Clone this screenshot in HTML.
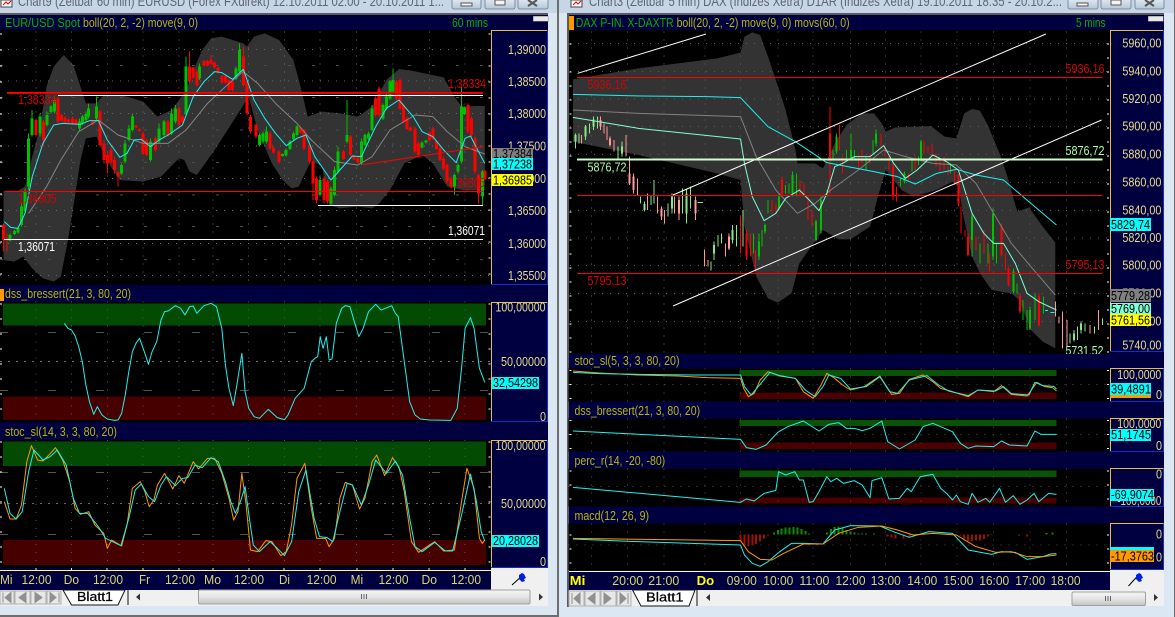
<!DOCTYPE html>
<html><head><meta charset="utf-8"><style>
html,body{margin:0;padding:0;background:#dbe7f3;width:1175px;height:617px;overflow:hidden}
svg{display:block}
text{font-family:"Liberation Sans",sans-serif;font-size:13px}
.n *{vector-effect:non-scaling-stroke}
rect,.c{shape-rendering:crispEdges}
polyline{stroke-linejoin:round}
.y{fill:#e8dc8c}.o{fill:#b8b800}.g{fill:#00b000}.k{fill:#000}.t{fill:#d8d870}.r{fill:#d80000}.w{fill:#fff}.p{fill:#aaffaa}
.lin{fill:none}
</style></head><body>
<svg xmlns="http://www.w3.org/2000/svg" width="1175" height="617" viewBox="0 0 1175 617">
<defs>
<linearGradient id="tb" x1="0" y1="0" x2="0" y2="1"><stop offset="0" stop-color="#f6f6f6"/><stop offset=".5" stop-color="#e4e4e4"/><stop offset="1" stop-color="#c4c4c4"/></linearGradient>
<linearGradient id="bt" x1="0" y1="0" x2="0" y2="1"><stop offset="0" stop-color="#eef3f8"/><stop offset="1" stop-color="#b4c6d8"/></linearGradient>
</defs>
<rect width="1175" height="617" fill="#dbe7f3"/>
<rect width="1175" height="13" fill="#c6d6e6"/>
<!-- frames -->
<rect x="557" y="0" width="2" height="617" fill="#6e6e6e"/>
<rect x="1174" y="0" width="1" height="617" fill="#6e6e6e"/>
<rect x="0" y="615" width="559" height="2" fill="#6e6e6e"/>
<rect x="0" y="13" width="548" height="2" fill="#5a5a5a"/>
<rect x="567" y="13" width="597" height="2" fill="#5a5a5a"/>
<rect x="567" y="13" width="2" height="594" fill="#5a5a5a"/>
<!-- title bars -->
<rect x="1" y="0" width="11" height="7" fill="#fff" stroke="#444" stroke-width=".6"/><path d="M3 5l3-3 2 2 3-3" stroke="#d00" fill="none"/>
<text x="18" y="6" fill="#5d6670" textLength="426" lengthAdjust="spacingAndGlyphs" style="font-size:14px">Chart9 (Zeitbar 60 min)  EURUSD (Forex FXdirekt) 12.10.2011 02:00 - 20.10.2011 1...</text>
<rect x="571" y="0" width="11" height="7" fill="#fff" stroke="#444" stroke-width=".6"/><path d="M573 5l3-3 2 2 3-3" stroke="#d00" fill="none"/>
<text x="589" y="6" fill="#5d6670" textLength="473" lengthAdjust="spacingAndGlyphs" style="font-size:14px">Chart3 (Zeitbar 5 min)  DAX (Indizes Xetra) D1AR (Indizes Xetra) 19.10.2011 18:35 - 20.10.2...</text>
<g fill="url(#bt)" stroke="#6a7a8a" stroke-width=".8">
<rect x="452" y="-4" width="29" height="13" rx="2" style="shape-rendering:auto"/><rect x="485" y="-4" width="30" height="13" rx="2" style="shape-rendering:auto"/><rect x="518" y="-4" width="30" height="13" rx="2" style="shape-rendering:auto"/>
<rect x="1068" y="-4" width="30" height="13" rx="2" style="shape-rendering:auto"/><rect x="1101" y="-4" width="30" height="13" rx="2" style="shape-rendering:auto"/><rect x="1135" y="-4" width="29" height="13" rx="2" style="shape-rendering:auto"/>
</g>
<g fill="#f4f4f4" stroke="#555" stroke-width="1">
<rect x="461" y="3" width="11" height="3"/><rect x="495" y="0" width="10" height="5"/><rect x="1077" y="3" width="11" height="3"/><rect x="1111" y="0" width="10" height="5"/>
</g>
<path d="M528 0l9 6m0-6l-9 6M1145 0l9 6m0-6l-9 6" stroke="#555" stroke-width="2" fill="none"/>

<!-- LEFT WINDOW -->
<rect x="0" y="15" width="548" height="15" fill="#000040"/>
<rect x="0" y="30" width="491" height="255" fill="#000"/>
<rect x="491" y="30" width="57" height="255" fill="#000040"/>
<rect x="533" y="16" width="15" height="5" fill="#e8e8e8" stroke="#888" stroke-width=".5"/>
<g class="n" transform="scale(.35778,.33333)">
<polygon fill="#333" points="10,572 50,572 70,560 90,470 110,390 130,260 150,200 178,165 205,195 225,260 240,310 270,310 290,285 340,285 400,305 440,350 480,330 520,270 545,200 565,150 590,115 620,110 680,130 690,140 710,110 740,100 780,120 820,180 840,260 860,350 900,335 950,340 1000,350 1040,320 1080,240 1115,207 1150,212 1240,232 1270,290 1290,320 1330,318 1355,318 1355,570 1300,572 1250,560 1210,490 1180,465 1130,490 1090,570 1060,610 1040,625 1000,620 950,625 920,615 900,500 870,480 835,560 815,565 790,540 760,490 720,390 695,290 660,350 600,450 550,525 530,515 515,480 500,475 450,530 400,545 335,540 310,500 285,450 270,410 240,415 225,480 205,620 190,720 170,830 150,845 120,835 90,805 65,770 40,785 10,780"/>
<path class="c" stroke="#6a6a6a" stroke-dasharray="1 7" fill="none" d="M0 148H1372M0 243H1372M0 340H1372M0 438H1372M0 535H1372M0 632H1372M0 730H1372M0 826H1372M100 95V855M200 95V855M300 95V855M400 95V855M500 95V855M595 95V855M695 95V855M795 95V855M895 95V855M997 95V855M1098 95V855M1200 95V855M1300 95V855"/>
<path class="c" stroke="#4c4c4c" stroke-dasharray="3 21" fill="none" d="M0 196H1372M0 293H1372M0 390H1372M0 487H1372M0 585H1372M0 680H1372M0 778H1372"/>
<path class="c" stroke="#fff" stroke-width="2" stroke-dasharray="1 15" fill="none" d="M3 100V855M1368 100V855"/>
<!-- wicks -->
<path class="c" stroke="#00c000" stroke-width="1" fill="none" d="M28 700V725M40 690V705M50 680V700M60 610V680M70 565V640M80 400V570M90 330V410M112 340V410M132 335V380M142 315V340M152 285V340M222 355V395M230 345V375M240 335V365M248 310V355M270 290V360M340 490V525M350 420V490M360 375V425M370 340V395M420 415V485M445 370V430M458 360V410M480 325V405M490 315V370M520 170V345M558 190V240M660 200V240M670 130V220M725 400V440M735 395V430M745 380V430M790 460V470M800 445V470M810 420V450M820 395V420M830 375V410M895 530V590M925 560V615M935 500V590M945 440V520M970 300V430M1010 415V495M1020 400V440M1030 395V420M1040 315V395M1070 310V360M1080 280V330M1090 240V300M1098 205V280M1180 425V445M1190 420V430M1270 520V585M1280 490V520M1290 260V490M1298 320V345M1348 510V615"/>
<path class="c" stroke="#ff0000" stroke-width="1" fill="none" d="M10 670V755M20 700V755M100 355V410M122 360V440M162 290V370M172 340V365M182 350V370M192 355V370M202 350V375M212 355V375M258 360V375M280 330V440M290 420V490M300 460V520M310 440V490M320 470V520M330 515V560M380 375V385M390 385V395M400 395V465M410 415V470M435 410V455M470 360V410M500 320V380M510 345V370M530 155V250M540 200V235M550 210V260M570 180V200M580 180V200M590 165V195M600 185V205M610 200V220M620 225V250M630 225V250M640 235V275M650 240V275M680 140V260M690 240V345M700 345V400M715 370V415M755 395V450M765 440V460M780 450V490M840 380V400M850 385V450M865 430V490M875 480V600M885 530V610M905 530V610M915 540V610M960 450V480M980 405V470M990 465V480M1000 470V490M1050 290V350M1060 260V350M1108 240V300M1118 235V330M1128 310V370M1138 350V390M1148 380V395M1160 380V460M1170 425V470M1200 395V425M1210 380V420M1220 420V450M1230 440V485M1240 470V510M1250 490V550M1260 530V565M1308 310V400M1318 350V410M1328 410V520M1338 520V610M1356 510V540"/>
<!-- bodies -->
<path class="c" stroke="#00c000" stroke-width="3" fill="none" d="M28 705V722M40 693V702M50 684V697M60 620V675M70 575V632M80 415V560M90 355V405M112 350V400M132 345V375M142 320V336M152 300V335M222 365V385M230 350V370M240 342V360M248 325V350M270 320V355M340 495V520M350 430V485M360 385V420M370 350V390M420 425V480M445 385V425M458 365V405M480 340V400M490 325V365M520 200V340M558 200V235M660 205V235M670 150V215M725 405V435M735 400V425M745 395V425M790 462V468M800 450V467M810 425V447M820 400V417M830 380V405M895 540V585M925 565V610M935 510V585M945 455V515M970 405V425M1010 425V490M1020 405V435M1030 400V415M1040 325V390M1070 315V355M1080 290V325M1090 245V295M1098 240V275M1180 427V442M1190 422V428M1270 525V560M1280 495V515M1290 320V485M1298 322V342M1348 515V590"/>
<path class="c" stroke="#ff0000" stroke-width="3" fill="none" d="M10 675V720M100 360V405M122 365V420M162 295V365M172 345V362M182 353V367M192 358V367M202 355V372M212 358V372M258 362V373M280 335V435M290 430V480M300 465V490M310 450V485M320 480V510M330 518V530M380 377V383M390 387V393M400 400V462M410 420V465M435 415V450M470 365V405M500 325V375M510 350V367M530 200V245M540 203V232M550 215V255M570 183V197M580 183V197M590 180V192M600 188V202M610 203V217M620 228V247M630 228V247M640 240V270M650 245V270M680 170V255M690 245V340M700 350V395M715 375V410M755 400V445M765 442V458M780 455V485M840 383V397M850 390V445M865 435V485M875 485V550M885 535V600M905 535V600M915 545V605M960 455V477M980 410V465M990 467V478M1000 472V487M1050 295V345M1060 265V345M1108 245V295M1118 240V325M1128 315V365M1138 355V387M1148 382V392M1160 385V455M1170 430V465M1200 398V422M1210 385V417M1220 423V447M1230 445V480M1240 475V505M1250 495V545M1260 535V560M1308 315V395M1318 355V405M1328 415V515M1338 525V580M1356 513V537"/>
<!-- averages -->
<polyline class="lin" stroke="#858585" points="80,640 130,560 170,480 220,395 275,360 330,405 400,430 470,430 520,390 580,310 640,250 680,215 720,250 770,310 830,370 870,420 935,485 1000,495 1040,470 1090,390 1160,345 1210,350 1250,395 1300,440 1355,462"/>
<polyline class="lin" stroke="#20f0f0" points="12,665 30,682 50,685 70,640 90,530 120,430 150,375 175,370 225,373 250,362 275,362 300,420 335,472 355,460 375,420 395,418 420,440 445,420 470,405 510,375 540,290 570,245 600,215 620,218 650,238 680,208 710,300 740,355 770,400 800,437 830,415 855,405 880,470 925,540 950,510 985,468 1010,470 1050,380 1080,325 1115,300 1155,350 1180,395 1210,410 1240,450 1275,488 1300,415 1315,408 1340,460 1355,490"/>
<!-- levels -->
<path class="c" fill="none" stroke="#ff0000" d="M15 575H1352"/>
<path fill="none" stroke="#ff0000" d="M1015 494L1352 440"/>
</g>
<rect x="7" y="92" width="476" height="1" fill="#ff0000"/>
<rect x="7" y="93" width="476" height="1" fill="#e00000"/>
<rect x="58" y="95" width="425" height="1" fill="#ffffff"/>
<rect x="4" y="239" width="479" height="1" fill="#ffffff"/>
<rect x="318" y="205" width="165" height="1" fill="#ffffff"/>
<text class="r" x="18" y="104" textLength="38.500" lengthAdjust="spacingAndGlyphs">1,38334</text>
<text class="r" x="448" y="88" textLength="38" lengthAdjust="spacingAndGlyphs">1,38334</text>
<text class="r" x="18" y="203" textLength="38.500" lengthAdjust="spacingAndGlyphs">1,36805</text>
<text class="r" x="457" y="187" textLength="28" lengthAdjust="spacingAndGlyphs">36805</text>
<text class="w" x="18" y="251" textLength="37" lengthAdjust="spacingAndGlyphs">1,36071</text>
<text class="w" x="448" y="235" textLength="37" lengthAdjust="spacingAndGlyphs">1,36071</text>
<text class="g" x="5" y="27" textLength="75" lengthAdjust="spacingAndGlyphs">EUR/USD Spot</text>
<text class="o" x="83" y="27" textLength="115" lengthAdjust="spacingAndGlyphs">boll(20, 2, -2) move(9, 0)</text>
<text class="g" x="452" y="27" textLength="36" lengthAdjust="spacingAndGlyphs">60 mins</text>
<!-- axis L1 -->
<path d="M548 30.500H491.500V284" fill="none" stroke="#e8c040"/><path d="M491 284.500H547.500V30" fill="none" stroke="#1030c0"/>
<g class="y">
<text x="508" y="54" textLength="38" lengthAdjust="spacingAndGlyphs">1,39000</text>
<text x="508" y="86" textLength="38" lengthAdjust="spacingAndGlyphs">1,38500</text>
<text x="508" y="118" textLength="38" lengthAdjust="spacingAndGlyphs">1,38000</text>
<text x="508" y="150.500" textLength="38" lengthAdjust="spacingAndGlyphs">1,37500</text>
<text x="508" y="183" textLength="38" lengthAdjust="spacingAndGlyphs">1,37000</text>
<text x="508" y="215" textLength="38" lengthAdjust="spacingAndGlyphs">1,36500</text>
<text x="508" y="248" textLength="38" lengthAdjust="spacingAndGlyphs">1,36000</text>
<text x="508" y="280" textLength="38" lengthAdjust="spacingAndGlyphs">1,35500</text>
</g>
<rect x="492" y="148" width="41" height="10" fill="#808080"/><text class="k" x="493" y="158" textLength="39" lengthAdjust="spacingAndGlyphs">1,37384</text>
<rect x="492" y="158" width="41" height="12" fill="#00ffff"/><text class="k" x="493" y="168.500" textLength="39" lengthAdjust="spacingAndGlyphs">1,37238</text>
<rect x="492" y="174" width="41" height="12" fill="#ffff00"/><text class="k" x="493" y="184.500" textLength="39" lengthAdjust="spacingAndGlyphs">1,36985</text>

<!-- lower left -->
<rect x="0" y="285" width="548" height="17" fill="#000040"/>
<rect x="0" y="289" width="4" height="12" fill="#ff9900"/>
<rect x="0" y="422" width="548" height="18" fill="#000040"/>
<rect x="0" y="302" width="491" height="120" fill="#000"/>
<rect x="0" y="440" width="491" height="128" fill="#000"/>
<rect x="491" y="302" width="57" height="120" fill="#000040"/>
<rect x="491" y="440" width="57" height="128" fill="#000040"/>
<rect x="0" y="568" width="491" height="22" fill="#000040"/>
<rect x="491" y="568" width="57" height="22" fill="#f0f0f0"/>
<rect x="0" y="590" width="548" height="16" fill="#f0f0f0"/>
<g class="n" transform="translate(0,285) scale(.35778,.33333)">
<rect x="8" y="55" width="1350" height="67" fill="#034a03"/>
<rect x="8" y="335" width="1350" height="70" fill="#470000"/>
<rect x="8" y="470" width="1350" height="73" fill="#034a03"/>
<rect x="8" y="765" width="1350" height="75" fill="#470000"/>
<path class="c" stroke="#6a6a6a" stroke-dasharray="2 6" fill="none" d="M0 230H1372M0 656H1372"/>
<path class="c" stroke="#555" stroke-dasharray="8 40" fill="none" d="M0 143H1372M0 317H1372M0 562H1372M0 748H1372"/>
<path class="c" stroke="#555" stroke-dasharray="1 7" fill="none" d="M100 50V410M200 50V410M300 50V410M400 50V410M500 50V410M595 50V410M695 50V410M795 50V410M895 50V410M997 50V410M1098 50V410M1200 50V410M1300 50V410M100 465V848M200 465V848M300 465V848M400 465V848M500 465V848M595 465V848M695 465V848M795 465V848M895 465V848M997 465V848M1098 465V848M1200 465V848M1300 465V848"/>
<path class="c" stroke="#fff" stroke-width="2" stroke-dasharray="1 14" fill="none" d="M3 55V410M1368 55V410M3 470V848M1368 470V848"/>
<polyline class="lin" stroke="#20f0f0" points="180,115 190,130 200,135 210,153 220,185 230,230 240,300 250,350 262,388 272,365 285,390 300,402 320,406 330,405 340,385 350,330 360,260 370,200 380,175 390,160 405,205 415,238 425,200 438,170 450,105 460,80 470,78 490,62 505,70 517,90 530,65 540,63 550,85 570,62 590,55 605,65 620,130 630,240 640,310 652,362 662,300 676,205 685,320 695,370 710,395 725,400 750,373 775,398 795,404 805,390 825,340 850,310 870,230 880,220 888,215 895,155 903,190 912,155 920,225 928,222 940,115 955,70 965,62 978,65 1003,155 1015,130 1030,80 1050,58 1065,75 1095,62 1105,85 1113,95 1130,230 1145,350 1160,390 1175,402 1200,405 1260,406 1278,370 1290,250 1300,130 1315,98 1325,130 1340,250 1355,292"/>
<polyline class="lin" stroke="#ff9900" points="12,650 28,702 45,702 60,660 75,530 88,482 105,525 120,528 135,512 155,488 175,525 195,590 210,670 225,688 248,680 265,720 290,745 300,790 312,765 340,783 355,720 370,610 392,590 405,620 417,665 430,645 440,600 460,565 483,612 500,572 515,595 540,530 555,552 580,520 600,520 620,565 640,640 653,705 665,680 676,565 688,660 700,795 720,800 743,767 760,770 785,812 800,800 815,720 830,580 852,535 870,670 885,760 910,760 920,785 935,760 950,640 965,592 985,600 1005,672 1020,640 1040,530 1053,510 1075,572 1097,518 1115,545 1130,620 1150,770 1170,802 1215,770 1240,798 1270,795 1290,650 1305,550 1325,610 1340,760 1348,775 1355,765"/>
<polyline class="lin" stroke="#20f0f0" points="12,610 28,685 45,702 62,680 80,560 95,495 120,525 140,515 160,495 185,540 205,640 222,685 245,685 275,725 295,760 315,770 338,782 360,700 378,615 395,597 415,635 432,650 450,600 465,575 490,602 510,580 525,578 545,540 565,548 590,518 610,530 630,590 645,650 658,685 672,650 685,605 697,700 708,780 725,800 755,770 775,790 795,812 815,770 835,620 855,555 878,700 893,755 915,758 930,770 950,680 970,595 985,600 1010,660 1030,600 1050,525 1080,565 1105,528 1125,570 1145,700 1160,785 1180,800 1215,772 1245,798 1265,798 1290,690 1315,567 1330,640 1345,740 1355,768"/>
</g>
<text class="o" x="5" y="298" textLength="126" lengthAdjust="spacingAndGlyphs">dss_bressert(21, 3, 80, 20)</text>
<text class="o" x="5" y="436" textLength="112" lengthAdjust="spacingAndGlyphs">stoc_sl(14, 3, 3, 80, 20)</text>
<path d="M548 302.500H491.500V421.500" fill="none" stroke="#e8c040"/><path d="M491 421.500H547.500V302" fill="none" stroke="#1030c0"/>
<path d="M548 440.500H491.500V567.500" fill="none" stroke="#e8c040"/><path d="M491 567.500H547.500V440" fill="none" stroke="#1030c0"/>
<g class="y">
<text x="495.500" y="311.500" textLength="50" lengthAdjust="spacingAndGlyphs">100,00000</text>
<text x="501" y="366" textLength="45" lengthAdjust="spacingAndGlyphs">50,00000</text>
<text x="540" y="421" textLength="6" lengthAdjust="spacingAndGlyphs">0</text>
<text x="495.500" y="450" textLength="50" lengthAdjust="spacingAndGlyphs">100,00000</text>
<text x="501" y="508" textLength="45" lengthAdjust="spacingAndGlyphs">50,00000</text>
<text x="540" y="566" textLength="6" lengthAdjust="spacingAndGlyphs">0</text>
</g>
<rect x="492" y="377" width="47" height="12" fill="#00ffff"/><text class="k" x="493" y="387" textLength="45" lengthAdjust="spacingAndGlyphs">32,54298</text>
<rect x="492" y="535" width="47" height="12" fill="#00ffff"/><text class="k" x="493" y="545" textLength="45" lengthAdjust="spacingAndGlyphs">20,28028</text>
<!-- time axis left -->
<rect x="0" y="570" width="491" height="1" fill="#ffff60"/>
<path class="c" d="M36 568v2M71.500 568v2M107 568v2M143 568v2M179 568v2M213 568v2M249 568v2M284 568v2M320 568v2M357 568v2M393 568v2M429 568v2M465 568v2" stroke="#ffff60"/>
<g class="t">
<text x="0" y="584" textLength="12.500" lengthAdjust="spacingAndGlyphs">Mi</text>
<text x="21.500" y="584" textLength="30" lengthAdjust="spacingAndGlyphs">12:00</text>
<text x="63.700" y="584" textLength="15.300" lengthAdjust="spacingAndGlyphs">Do</text>
<text x="93" y="584" textLength="30" lengthAdjust="spacingAndGlyphs">12:00</text>
<text x="139" y="584" textLength="11" lengthAdjust="spacingAndGlyphs">Fr</text>
<text x="165" y="584" textLength="30" lengthAdjust="spacingAndGlyphs">12:00</text>
<text x="204" y="584" textLength="17" lengthAdjust="spacingAndGlyphs">Mo</text>
<text x="234" y="584" textLength="30" lengthAdjust="spacingAndGlyphs">12:00</text>
<text x="279" y="584" textLength="11" lengthAdjust="spacingAndGlyphs">Di</text>
<text x="306.600" y="584" textLength="30" lengthAdjust="spacingAndGlyphs">12:00</text>
<text x="350.600" y="584" textLength="12.500" lengthAdjust="spacingAndGlyphs">Mi</text>
<text x="378.500" y="584" textLength="30" lengthAdjust="spacingAndGlyphs">12:00</text>
<text x="421.500" y="584" textLength="15.500" lengthAdjust="spacingAndGlyphs">Do</text>
<text x="451" y="584" textLength="30" lengthAdjust="spacingAndGlyphs">12:00</text>
</g>
<path d="M512 585L523 575" stroke="#000" stroke-width="1" fill="none"/>
<path d="M519 575l3-2 2 1 2 4-2 1 1 2-3 1-3-3z" fill="#0020e0"/>
<!-- tab row left -->
<g fill="#e8e8e8" stroke="#b0b0b0">
<rect x="0" y="591" width="14" height="13"/><rect x="15" y="591" width="15" height="13"/><rect x="31" y="591" width="15" height="13"/><rect x="47" y="591" width="14" height="13"/>
</g>
<path d="M3 592.500v10M11 592.500v10L5 597.500zM26 592.500v10l-7-5zM35 592.500v10l7-5zM50 592.500v10l6-5zM59 592.500v10" fill="#909090" stroke="#909090"/>
<polygon points="63,590 71.500,605 118,605 125,590" fill="#fff" stroke="#111"/>
<text x="77" y="601" fill="#000" stroke="#000" stroke-width=".25" textLength="36" lengthAdjust="spacingAndGlyphs">Blatt1</text>
<rect x="127" y="590" width="2" height="15" fill="#808080"/>
<rect x="198.500" y="590" width="331.500" height="14" rx="1.500" fill="url(#tb)" stroke="#a0a0a0" style="shape-rendering:auto"/>
<path d="M361.500 594v5M364 594v5M366.500 594v5" stroke="#666" fill="none"/>
<path d="M140 593.500v7l-4-3.500zM539 593.500v7l4-3.500z" fill="#333"/>

<!-- RIGHT WINDOW -->
<rect x="569" y="15" width="595" height="15" fill="#000040"/>
<rect x="569" y="30" width="541" height="324" fill="#000"/>
<rect x="1110" y="30" width="54" height="324" fill="#000040"/>
<rect x="569" y="16" width="5" height="14" fill="#ff9900"/>
<rect x="1148" y="16" width="15" height="5" fill="#e8e8e8" stroke="#888" stroke-width=".5"/>
<g class="n" transform="translate(560,0) scale(.39246,.33333)">
<polygon fill="#333" points="33,238 200,205 400,175 460,158 470,110 490,97 510,105 530,170 550,240 575,330 600,450 605,490 650,490 670,505 680,480 700,430 730,375 770,340 800,340 820,370 830,395 855,382 945,378 980,410 1010,415 1030,340 1050,327 1070,332 1090,375 1120,460 1140,530 1165,635 1195,622 1230,680 1262,728 1262,1045 1230,1025 1200,990 1170,900 1150,880 1100,870 1070,820 1050,770 1030,660 1015,560 1000,545 960,570 900,590 870,570 830,510 810,590 790,680 740,718 710,718 670,690 640,740 610,790 590,880 555,908 530,895 500,830 470,680 460,540 400,520 200,465 33,425"/>
<path class="c" stroke="#5c5c5c" stroke-dasharray="1 7" fill="none" d="M25 130H1400M25 214H1400M25 297H1400M25 380H1400M25 463H1400M25 547H1400M25 631H1400M25 714H1400M25 796H1400M25 880H1400M25 964H1400M80 95V1058M172 95V1058M265 95V1058M370 95V1058M460 95V1058M555 95V1058M645 95V1058M740 95V1058M830 95V1058M920 95V1058M1012 95V1058M1105 95V1058M1197 95V1058M1290 95V1058"/>
<path class="c" stroke="#fff" stroke-width="2" stroke-dasharray="1 13" fill="none" d="M27 130V1058M1396 130V1058"/>
<!-- pale bars -->
<path class="c" stroke="#88e888" stroke-width="1" fill="none" d="M40 400V445M48 400V430M65 375V420M75 370V400M85 350V390M95 350V385M148 440V475M158 425V470M205 590V610M215 605V635M232 585V615M240 540V610M275 610V650M285 580V640M312 565V640M322 565V670M332 560V625M350 607H365M385 785V812M393 725V780M403 705V740M412 700V730M440 675V730M450 675V740M466 630V740M1300 1000V1030M1310 990V1025M1318 980V1020M1328 965V1000M1338 970V995M1362 980V1000M1382 955V975"/>
<path class="c" stroke="#ff9a9a" stroke-width="1" fill="none" d="M55 405V430M103 350V390M112 370V400M120 380V420M128 410V440M138 420V455M168 405V470M177 470V555M187 520V580M197 535V585M223 580V630M248 590V640M258 620V660M266 630V670M292 590V640M303 590V660M345 590V660M368 748V800M377 780V800M422 730V770M430 700V750M1262 905V950M1272 950V970M1280 935V1045M1292 960V1040M1350 975V1000M1372 930V990"/>
<path class="c" stroke="#88e888" stroke-width="2" fill="none" d="M40 405V425M65 380V410M85 358V380M158 440V460M215 612V630M285 590V625M322 580V640M393 735V760M440 690V720M1310 1000V1020M1328 970V990"/>
<path class="c" stroke="#ff9a9a" stroke-width="2" fill="none" d="M103 360V380M128 415V435M177 520V550M187 530V570M258 625V650M303 600V640M345 600V640M430 710V745"/>
<!-- strong bars -->
<path class="c" stroke="#00c000" stroke-width="1" fill="none" d="M493 700V760M507 700V780M515 690V740M522 670V700M530 600V640M558 580V630M575 555V580M583 550V580M592 515V590M603 520V590M652 660V725M665 590V700M680 570V590M696 450V480M705 400V460M730 450V480M742 400V480M750 450V480M780 470V510M797 420V460M805 388V440M868 535V560M878 515V550M897 480V515M913 470V495M920 420V480M995 490V520M1050 640V770M1070 730V790M1090 730V790M1103 625V780M1112 730V790M1155 805V880M1165 850V880M1180 900V960M1190 930V990M1197 920V990M1210 880V960M1232 890V940"/>
<path class="c" stroke="#ff0000" stroke-width="1" fill="none" d="M460 650V760M475 690V780M485 700V770M498 750V810M540 600V640M550 610V640M566 530V590M612 540V590M622 550V590M632 590V660M642 630V680M688 320V580M712 375V450M720 470V520M760 470V510M770 450V490M790 460V490M818 400V440M828 440V470M838 470V510M848 490V600M858 560V605M888 520V540M905 470V510M928 425V460M938 440V460M948 430V470M958 460V500M968 480V515M978 470V510M988 500V525M1005 510V555M1015 520V620M1022 620V700M1032 690V710M1040 700V770M1060 710V750M1080 690V760M1095 760V815M1125 670V770M1135 760V810M1143 800V860M1172 880V940M1220 880V980"/>
<path class="c" stroke="#00c000" stroke-width="2" fill="none" d="M507 725V770M522 675V695M558 590V625M592 525V580M652 665V720M665 600V690M705 410V455M742 450V475M805 400V430M878 520V545M920 425V475M1050 650V720M1103 640V770M1155 815V875M1197 930V985"/>
<path class="c" stroke="#ff0000" stroke-width="2" fill="none" d="M475 700V770M566 540V580M688 400V480M848 500V590M1015 530V610M1040 710V765M1125 680V765M1143 805V855M1220 890V975M1172 890V935"/>
<!-- MAs -->
<polyline class="lin" stroke="#808080" points="33,330 200,340 460,350 500,470 550,570 605,640 650,610 690,570 760,510 825,450 880,470 950,490 1010,495 1060,550 1100,630 1150,730 1200,800 1262,885"/>
<polyline class="lin" stroke="#20f0f0" points="33,283 210,288 375,290 460,293 530,380 600,425 680,488 800,515 860,530 905,552 960,520 1010,508 1060,525 1130,540 1170,580 1230,640 1265,675"/>
<polyline class="lin" stroke="#7fffd4" points="33,352 200,385 460,417 470,490 490,590 520,662 550,640 575,595 610,570 635,600 660,632 680,580 700,500 720,490 750,470 790,470 825,437 850,490 880,535 910,510 950,465 985,485 1015,510 1050,640 1080,700 1105,730 1130,730 1160,790 1190,880 1220,905 1265,930"/>
<path class="c" stroke="#00ffff" fill="none" d="M1236 932H1244M1250 938H1260"/>
<!-- levels -->
<path class="c" stroke="#ff0000" fill="none" d="M43 232H1382M43 587H1382M43 820H1382"/>
<path stroke="#ffffff" fill="none" d="M45 220L372 102M288 585L1238 102M288 918L1380 360"/>
<path class="c" stroke="#ccffcc" stroke-width="2" fill="none" d="M43 478H1382"/>
</g>
<text class="r" x="587.500" y="89" textLength="39" lengthAdjust="spacingAndGlyphs">5936,16</text>
<text class="r" x="1065.500" y="73" textLength="39" lengthAdjust="spacingAndGlyphs">5936,16</text>
<text class="p" x="587.500" y="171.500" textLength="39" lengthAdjust="spacingAndGlyphs">5876,72</text>
<text class="p" x="1065.500" y="155" textLength="39" lengthAdjust="spacingAndGlyphs">5876,72</text>
<text class="r" x="587.500" y="285" textLength="39" lengthAdjust="spacingAndGlyphs">5795,13</text>
<text class="r" x="1065.500" y="269" textLength="39" lengthAdjust="spacingAndGlyphs">5795,13</text>
<text class="p" x="1065.500" y="355" textLength="38" lengthAdjust="spacingAndGlyphs">5731,52</text>
<text class="g" x="575.700" y="27" textLength="98" lengthAdjust="spacingAndGlyphs">DAX P-IN. X-DAXTR</text>
<text class="o" x="676.600" y="27" textLength="173" lengthAdjust="spacingAndGlyphs">boll(20, 2, -2) move(9, 0) movs(60, 0)</text>
<text class="g" x="1076" y="27" textLength="29.500" lengthAdjust="spacingAndGlyphs">5 mins</text>
<path d="M1164 30.500H1110.500V351" fill="none" stroke="#e8c040"/><path d="M1110 351.500H1163.500V30" fill="none" stroke="#1030c0"/>
<g class="y">
<text x="1122.400" y="47.300" textLength="39" lengthAdjust="spacingAndGlyphs">5960,00</text>
<text x="1122.400" y="75.300" textLength="39" lengthAdjust="spacingAndGlyphs">5940,00</text>
<text x="1122.400" y="103" textLength="39" lengthAdjust="spacingAndGlyphs">5920,00</text>
<text x="1122.400" y="130.700" textLength="39" lengthAdjust="spacingAndGlyphs">5900,00</text>
<text x="1122.400" y="158.300" textLength="39" lengthAdjust="spacingAndGlyphs">5880,00</text>
<text x="1122.400" y="186.300" textLength="39" lengthAdjust="spacingAndGlyphs">5860,00</text>
<text x="1122.400" y="214.300" textLength="39" lengthAdjust="spacingAndGlyphs">5840,00</text>
<text x="1122.400" y="242" textLength="39" lengthAdjust="spacingAndGlyphs">5820,00</text>
<text x="1122.400" y="269.300" textLength="39" lengthAdjust="spacingAndGlyphs">5800,00</text>
<text x="1122.400" y="297.300" textLength="39" lengthAdjust="spacingAndGlyphs">5780,00</text>
<text x="1122.400" y="325.300" textLength="39" lengthAdjust="spacingAndGlyphs">5760,00</text>
<text x="1122.400" y="349.700" textLength="39" lengthAdjust="spacingAndGlyphs">5740,00</text>
</g>
<rect x="1110" y="218" width="41" height="13" fill="#00ffff"/><text class="k" x="1111" y="229" textLength="39" lengthAdjust="spacingAndGlyphs">5829,74</text>
<rect x="1110" y="289" width="41" height="13" fill="#808080"/><text class="k" x="1111" y="300" textLength="39" lengthAdjust="spacingAndGlyphs">5779,28</text>
<rect x="1110" y="303" width="41" height="11" fill="#7fffd4"/><text class="k" x="1111" y="313" textLength="39" lengthAdjust="spacingAndGlyphs">5769,00</text>
<rect x="1110" y="314" width="41" height="12" fill="#ffff00"/><text class="k" x="1111" y="324.500" textLength="39" lengthAdjust="spacingAndGlyphs">5761,56</text>
<!-- lower right -->
<rect x="569" y="354" width="595" height="216" fill="#000040"/>
<rect x="569" y="570" width="541" height="20" fill="#000040"/>
<rect x="1110" y="570" width="54" height="20" fill="#f0f0f0"/>
<rect x="569" y="590" width="595" height="16" fill="#f0f0f0"/>
<g class="n" transform="translate(560,345) scale(.39246,.33333)">
<rect x="22" y="70" width="1378" height="100" fill="#000"/>
<rect x="22" y="220" width="1378" height="100" fill="#000"/>
<rect x="22" y="370" width="1378" height="115" fill="#000"/>
<rect x="22" y="535" width="1378" height="140" fill="#000"/>
<path class="c" fill="#0a5206" d="M457 75H1265V93H457ZM457 225H1265V243H457ZM457 376H1265V396H457Z"/>
<path class="c" fill="#4a0000" d="M457 143H1265V162H457ZM457 293H1265V312H457ZM457 457H1265V476H457Z"/>
<path class="c" stroke="#505050" stroke-dasharray="1 7" fill="none" d="M22 118H1400M22 268H1400M22 425H1400M22 600H1400M80 70V170M172 70V170M265 70V170M370 70V170M460 70V170M555 70V170M645 70V170M740 70V170M830 70V170M920 70V170M1012 70V170M1105 70V170M1197 70V170M1290 70V170M80 220V320M172 220V320M265 220V320M370 220V320M460 220V320M555 220V320M645 220V320M740 220V320M830 220V320M920 220V320M1012 220V320M1105 220V320M1197 220V320M1290 220V320M80 370V485M172 370V485M265 370V485M370 370V485M460 370V485M555 370V485M645 370V485M740 370V485M830 370V485M920 370V485M1012 370V485M1105 370V485M1197 370V485M1290 370V485M80 535V675M172 535V675M265 535V675M370 535V675M460 535V675M555 535V675M645 535V675M740 535V675M830 535V675M920 535V675M1012 535V675M1105 535V675M1197 535V675M1290 535V675"/>
<path class="c" stroke="#fff" stroke-width="2" stroke-dasharray="1 13" fill="none" d="M27 75V170M1396 75V170M27 225V320M1396 225V320M27 376V485M1396 376V485M27 568V675M1396 568V675"/>
<polyline class="lin" stroke="#ff9900" points="33,78 100,84 200,90 300,93 375,98 460,100 468,130 480,155 495,145 510,105 530,80 560,93 600,100 620,140 645,160 665,120 680,85 700,100 720,120 740,135 775,125 815,93 845,148 865,145 890,103 925,90 950,110 970,130 1000,140 1040,155 1065,135 1105,140 1125,122 1150,148 1190,153 1215,112 1235,125 1255,128 1265,138"/>
<polyline class="lin" stroke="#20f0f0" points="33,82 100,86 200,88 340,90 460,90 470,125 487,150 505,125 535,82 560,92 600,100 625,135 650,155 670,125 685,90 715,100 740,132 780,125 815,95 840,140 860,145 890,105 935,92 965,120 990,138 1040,152 1065,135 1110,138 1130,125 1150,146 1195,150 1210,112 1230,122 1258,124 1265,132"/>
<polyline class="lin" stroke="#20f0f0" points="33,258 460,283 475,308 500,313 525,300 555,262 580,245 620,228 660,258 685,238 710,233 730,250 750,250 770,257 790,250 820,228 835,290 865,312 905,285 925,245 950,235 1000,260 1020,295 1040,310 1060,303 1105,305 1125,288 1145,300 1190,303 1210,258 1225,268 1265,268"/>
<polyline class="lin" stroke="#20f0f0" points="33,427 460,472 475,462 495,468 520,445 550,436 557,380 575,390 598,380 610,405 620,405 635,472 645,470 660,440 680,395 690,410 705,400 722,415 750,407 770,420 790,458 795,407 820,398 838,462 865,460 885,430 895,440 918,395 950,388 970,430 985,445 1000,465 1010,450 1020,470 1040,478 1050,445 1065,472 1085,460 1095,472 1120,430 1135,472 1155,452 1172,478 1190,465 1208,445 1220,470 1245,445 1265,448"/>
<path class="c" stroke="#a01000" stroke-width="2" fill="none" d="M460 568V590M470 568V598M480 568V603M490 568V600M500 568V597M510 568V590M520 568V580M530 568V572M835 568V574M845 568V578M855 568V580M875 568V580M890 568V578M905 568V572M1020 568V572M1030 568V582M1040 568V588M1050 568V588M1060 568V586M1070 568V586M1080 568V582M1090 568V575M1100 568V570M1170 568V572M1190 568V575"/>
<path class="c" stroke="#0a8a0a" stroke-width="2" fill="none" d="M545 568V562M555 568V555M565 568V550M575 568V548M585 568V547M595 568V546M605 568V548M615 568V552M625 568V558M635 568V565M680 568V562M690 568V552M700 568V546M710 568V545M720 568V548M730 568V555M740 568V560M750 568V562M760 568V565M770 568V566M780 568V566M800 568V566M1240 568V564M1255 568V563"/>
<polyline class="lin" stroke="#20f0f0" points="33,582 200,590 460,600 470,630 490,655 510,664 530,650 560,620 590,595 625,595 670,597 700,555 740,542 815,543 850,560 890,577 940,560 1000,565 1040,615 1100,628 1125,620 1160,622 1190,643 1230,635 1250,627 1265,626"/>
<polyline class="lin" stroke="#ff9900" points="33,580 460,587 480,620 510,643 540,645 570,625 620,597 670,597 710,565 760,547 820,543 860,555 900,570 950,565 1010,570 1060,605 1110,622 1150,620 1190,635 1230,635 1265,630"/>
</g>
<g class="o">
<text x="574.500" y="365" textLength="105" lengthAdjust="spacingAndGlyphs">stoc_sl(5, 3, 3, 80, 20)</text>
<text x="574.500" y="415" textLength="125.600" lengthAdjust="spacingAndGlyphs">dss_bressert(21, 3, 80, 20)</text>
<text x="574.500" y="465" textLength="90.700" lengthAdjust="spacingAndGlyphs">perc_r(14, -20, -80)</text>
<text x="574.500" y="520" textLength="74.600" lengthAdjust="spacingAndGlyphs">macd(12, 26, 9)</text>
</g>
<g fill="none" stroke="#e8c040">
<path d="M1164 368.500H1110.500V401.500M1164 418.500H1110.500V451.500M1164 468.500H1110.500V506.500M1164 523.500H1110.500V569"/>
</g>
<g fill="none" stroke="#1030c0">
<path d="M1110 401.500H1163.500V368.500M1110 451.500H1163.500V418.500M1110 506.500H1163.500V468.500M1110 569.500H1163.500V523.500"/>
</g>
<g class="y">
<text x="1117.300" y="379" textLength="44" lengthAdjust="spacingAndGlyphs">100,0000</text>
<text x="1156" y="399" textLength="6" lengthAdjust="spacingAndGlyphs">0</text>
<text x="1117.300" y="428" textLength="44" lengthAdjust="spacingAndGlyphs">100,0000</text>
<text x="1156" y="450" textLength="6" lengthAdjust="spacingAndGlyphs">0</text>
<text x="1156" y="478.500" textLength="6" lengthAdjust="spacingAndGlyphs">0</text>
<text x="1117.300" y="505" textLength="44" lengthAdjust="spacingAndGlyphs">-100,0000</text>
<text x="1156" y="538.500" textLength="6" lengthAdjust="spacingAndGlyphs">0</text>
<text x="1156" y="561.500" textLength="6" lengthAdjust="spacingAndGlyphs">0</text>
</g>
<rect x="1110" y="395" width="41" height="3" fill="#ff9900"/>
<rect x="1110" y="383" width="41" height="12" fill="#00ffff"/><text class="k" x="1111" y="393.500" textLength="40" lengthAdjust="spacingAndGlyphs">39,4891</text>
<rect x="1110" y="429" width="41" height="12" fill="#00ffff"/><text class="k" x="1111" y="439" textLength="40" lengthAdjust="spacingAndGlyphs">51,1745</text>
<rect x="1110" y="489" width="44" height="12" fill="#00ffff"/><text class="k" x="1111" y="499" textLength="43" lengthAdjust="spacingAndGlyphs">-69,9074</text>
<rect x="1110" y="547" width="44" height="3" fill="#00ffff"/>
<rect x="1110" y="550" width="44" height="12" fill="#ff9900"/><text class="k" x="1111" y="560.500" textLength="43" lengthAdjust="spacingAndGlyphs">-17,3763</text>
<!-- time axis right -->
<rect x="569" y="571" width="541" height="1" fill="#ffffa0"/>
<g class="t">
<text x="612.200" y="585" textLength="31" lengthAdjust="spacingAndGlyphs">20:00</text>
<text x="648.300" y="585" textLength="31" lengthAdjust="spacingAndGlyphs">21:00</text>
<text x="726.800" y="585" textLength="30" lengthAdjust="spacingAndGlyphs">09:00</text>
<text x="763.300" y="585" textLength="30" lengthAdjust="spacingAndGlyphs">10:00</text>
<text x="799.400" y="585" textLength="30" lengthAdjust="spacingAndGlyphs">11:00</text>
<text x="835.500" y="585" textLength="30" lengthAdjust="spacingAndGlyphs">12:00</text>
<text x="870.800" y="585" textLength="30" lengthAdjust="spacingAndGlyphs">13:00</text>
<text x="907.300" y="585" textLength="30" lengthAdjust="spacingAndGlyphs">14:00</text>
<text x="943.400" y="585" textLength="30" lengthAdjust="spacingAndGlyphs">15:00</text>
<text x="979.200" y="585" textLength="30" lengthAdjust="spacingAndGlyphs">16:00</text>
<text x="1015.300" y="585" textLength="30" lengthAdjust="spacingAndGlyphs">17:00</text>
<text x="1050.600" y="585" textLength="30" lengthAdjust="spacingAndGlyphs">18:00</text>
</g>
<text x="569.800" y="585" fill="#ffff00" font-weight="700" textLength="15.700" lengthAdjust="spacingAndGlyphs">Mi</text>
<text x="696.600" y="585" fill="#ffff00" font-weight="700" textLength="17.600" lengthAdjust="spacingAndGlyphs">Do</text>
<path d="M1128.500 586L1138.500 575" stroke="#000" stroke-width="1" fill="none"/>
<path d="M1136 575l3-2 2 1 2 4-2 1 1 2-3 1-3-3z" fill="#0020e0"/>
<!-- tab row right -->
<g fill="#e8e8e8" stroke="#b0b0b0">
<rect x="569" y="591" width="15" height="15"/><rect x="585" y="591" width="15" height="15"/><rect x="601" y="591" width="15" height="15"/><rect x="617" y="591" width="14" height="15"/>
</g>
<path d="M572 593v11M580 593v11L574 598.500zM595 593v11l-7-5.500zM604 593v11l7-5.500zM620 593v11l6-5.500zM628 593v11" fill="#909090" stroke="#909090"/>
<polygon points="632.500,590 641,606 689,606 695,590" fill="#fff" stroke="#111"/>
<text x="646" y="601.500" fill="#000" stroke="#000" stroke-width=".25" textLength="37.500" lengthAdjust="spacingAndGlyphs">Blatt1</text>
<rect x="696" y="590" width="2" height="16" fill="#808080"/>
<rect x="1072" y="592" width="73.500" height="13.500" rx="1.500" fill="url(#tb)" stroke="#a0a0a0" style="shape-rendering:auto"/>
<path d="M1105.500 596v5M1108 596v5M1110.500 596v5" stroke="#666" fill="none"/>
<path d="M710 594v7l-4-3.500zM1154 594v7l4-3.500z" fill="#333"/>
</svg>
</body></html>
